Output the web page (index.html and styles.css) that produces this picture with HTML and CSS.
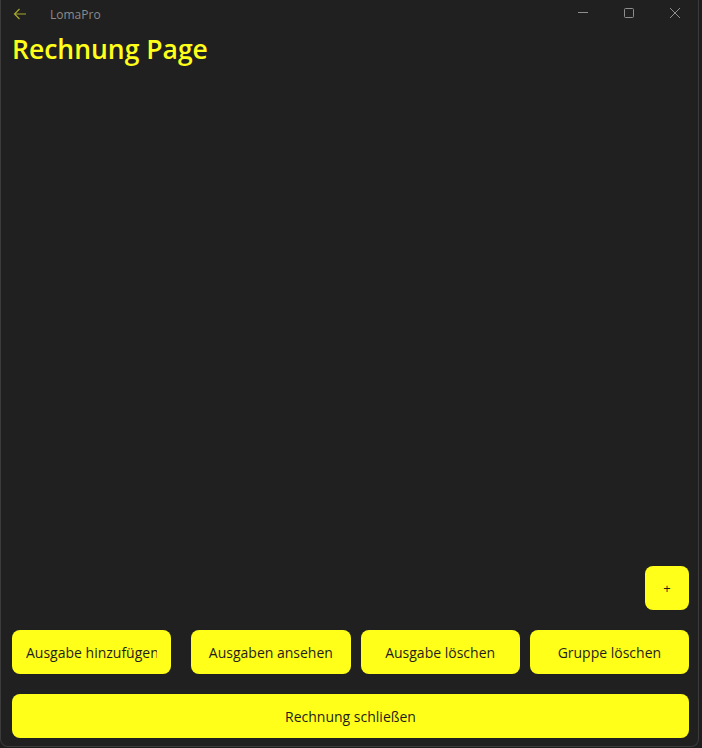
FILE: index.html
```html
<!DOCTYPE html>
<html lang="de">
<head>
<meta charset="utf-8">
<title>LomaPro</title>
<link rel="stylesheet" href="styles.css">
</head>
<body>
<div class="window">
  <div class="titlebar">
    <svg class="back" width="14" height="12" viewBox="0 0 14 12"><path d="M13 6H1.5M6.5 1L1.5 6L6.5 11" fill="none" stroke="currentColor" stroke-width="1.2"/></svg>
    <span class="app-name">LomaPro</span>
    <div class="controls">
      <svg class="ctl" width="46" height="28" viewBox="0 0 46 28"><path d="M18 12.5H28" stroke="currentColor" stroke-width="1"/></svg>
      <svg class="ctl" width="46" height="28" viewBox="0 0 46 28"><rect x="18.5" y="8.5" width="9" height="9" rx="1" fill="none" stroke="currentColor" stroke-width="1"/></svg>
      <svg class="ctl" width="46" height="28" viewBox="0 0 46 28"><path d="M18 8L28 18M28 8L18 18" stroke="currentColor" stroke-width="1"/></svg>
    </div>
  </div>
  <main class="page">
    <h1 class="title">Rechnung Page</h1>
    <div class="spacer"></div>
    <div class="fab-row"><button class="btn fab">+</button></div>
    <div class="actions">
      <button class="btn act first"><span class="clip">Ausgabe hinzufügen</span></button>
      <button class="btn act">Ausgaben ansehen</button>
      <button class="btn act">Ausgabe löschen</button>
      <button class="btn act">Gruppe löschen</button>
    </div>
    <button class="btn close">Rechnung schließen</button>
  </main>
</div>
</body>
</html>
```
FILE: styles.css
```css
html, body {
  margin: 0;
  padding: 0;
  height: 100%;
}
body {
  background: #1e1e1e;
  font-family: "Open Sans", "Noto Sans", sans-serif;
  overflow: hidden;
}
.window {
  box-sizing: border-box;
  width: 699px;
  height: 747px;
  background: #202020;
  border: 1px solid #3c3c3c;
  border-top: none;
  border-radius: 0 0 8px 8px;
  display: flex;
  flex-direction: column;
}
.titlebar {
  height: 28px;
  display: flex;
  align-items: center;
  flex-shrink: 0;
}
.back {
  color: #a8a828;
  margin-left: 12px;
}
.app-name {
  margin-left: 23px;
  font-size: 12px;
  color: #8b8b8b;
}
.controls {
  margin-left: auto;
  display: flex;
}
.ctl {
  color: #8e8e8e;
  display: block;
}
.page {
  flex: 1;
  display: flex;
  flex-direction: column;
  padding: 0 9px 8px 11px;
}
.title {
  margin: 5px 0 0 0;
  font-size: 26.5px;
  line-height: 32px;
  font-weight: 600;
  color: #ffff1a;
}
.spacer {
  flex: 1;
}
.fab-row {
  display: flex;
  justify-content: flex-end;
  margin-bottom: 20px;
}
.btn {
  background: #ffff1a;
  border: none;
  border-radius: 8px;
  color: #1e1e1e;
  font-family: "Open Sans", "Noto Sans", sans-serif;
  font-size: 14px;
  height: 44px;
  padding: 0 12px;
  white-space: nowrap;
  overflow: hidden;
}
.fab {
  width: 44px;
  padding: 0;
  font-size: 13px;
}
.actions {
  display: grid;
  grid-template-columns: repeat(4, 1fr);
  margin-bottom: 20px;
}
.act {
  margin-left: 10px;
  min-width: 0;
}
.act.first {
  margin-left: 0;
  margin-right: 10px;
  padding: 0 0 0 14px;
  text-align: left;
}
.clip {
  display: inline-block;
  vertical-align: middle;
  width: 131px;
  overflow: hidden;
}
.close {
  width: 100%;
}
```
